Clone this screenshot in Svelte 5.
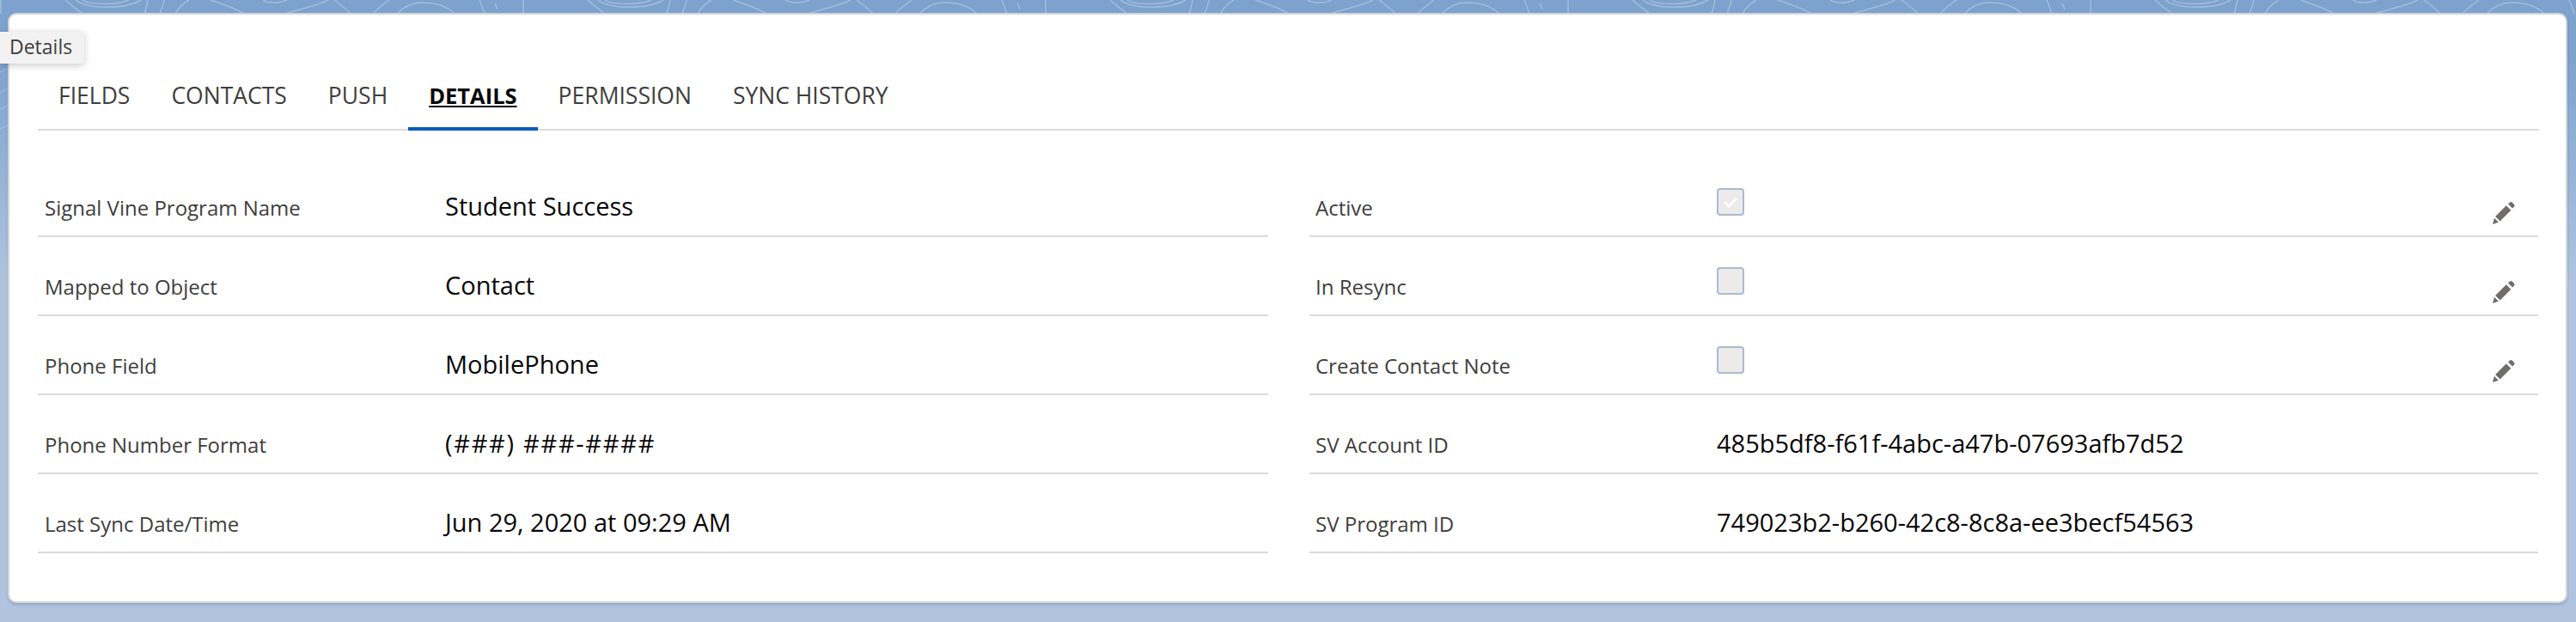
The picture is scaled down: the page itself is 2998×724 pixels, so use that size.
<script>
	const tabs = ['FIELDS', 'CONTACTS', 'PUSH', 'DETAILS', 'PERMISSION', 'SYNC HISTORY'];
	const active = 'DETAILS';

	const rows = [
		[
			{ label: 'Signal Vine Program Name', value: 'Student Success' },
			{ label: 'Active', check: true, on: true }
		],
		[
			{ label: 'Mapped to Object', value: 'Contact' },
			{ label: 'In Resync', check: true }
		],
		[
			{ label: 'Phone Field', value: 'MobilePhone' },
			{ label: 'Create Contact Note', check: true }
		],
		[
			{ label: 'Phone Number Format', value: '(###) ###-####', wide: true },
			{ label: 'SV Account ID', value: '485b5df8-f61f-4abc-a47b-07693afb7d52' }
		],
		[
			{ label: 'Last Sync Date/Time', value: 'Jun 29, 2020 at 09:29 AM' },
			{ label: 'SV Program ID', value: '749023b2-b260-42c8-8c8a-ee3becf54563' }
		]
	];
</script>

<div class="page">
	<svg class="contours" width="2998" height="200" fill="none" aria-hidden="true">
		<defs>
			<pattern id="topo" width="608" height="200" patternUnits="userSpaceOnUse">
				<g stroke="#a3bcdb" stroke-width="1.500">
					<path d="M76 0c6 6 14 11 20 16M96 0c8 6 40 6 54 0M88 0c10 10 56 12 76 0" />
					<path d="M172 0c-1 5-2 10-4 16M191 0c-1 6-3 11-5 16M204 16c3-6 9-12 16-16M245 0c15 5 30 10 39 16" />
					<path d="M306 0c5 4 20 4 28 0M332 16c18-6 36-9 50-16M389 0c8 6 14 10 19 16M453 0c-7 5-14 10-19 16" />
					<path d="M462 16c8-8 18-13 29-13 16 0 30 5 38 13M558 0c2 5 4 10 6 16M576 4l3 7M609 0v16M1 0v16" />
				</g>
			</pattern>
		</defs>
		<rect width="2998" height="16" fill="url(#topo)" />
		<path d="M0 84c3-2 6-3 10-4M0 108c3-2 6-4 10-6M0 128c3-2 6-4 10-6M0 150c3-1 6-3 10-4" stroke="#bccde4" stroke-width="1" opacity="0.7" />
	</svg>

	<div class="card">
		<nav class="tabs">
			{#each tabs as tab}
				<span class="tab" class:active={tab === active}>{tab}</span>
			{/each}
		</nav>

		<div class="rows">
			{#each rows as row}
				{#each row as cell}
					<div class="cell">
						<span class="label">{cell.label}</span>
						{#if cell.check}
							<span class="box">
								{#if cell.on}
									<svg width="18" height="14" viewBox="0 0 18 14" fill="none">
										<path d="M2 7l5 5 9-9" stroke="#fff" stroke-width="3" />
									</svg>
								{/if}
							</span>
							<svg class="pencil" width="28" height="28" viewBox="0 0 28 28">
								<path d="M21 1.500a2 2 0 0 1 2.600 0l2.400 2.400a2 2 0 0 1 0 2.600l-2 2-5-5zM16.800 5.200l5.500 5.500L9.600 23.400l-5.500-5.500zM2.900 19.700l5 5L1 27z" fill="#706e6b" />
							</svg>
						{:else}
							<span class="value" class:wide={cell.wide}>{cell.value}</span>
						{/if}
					</div>
				{/each}
			{/each}
		</div>
	</div>

	<div class="tooltip">Details</div>
</div>

<style>
	:global(body) {
		margin: 0;
	}

	.page {
		position: relative;
		box-sizing: border-box;
		width: 2998px;
		height: 724px;
		padding: 15px 10px 0 9px;
		background: linear-gradient(#7ca2cd, #7ca2cd 60px, #b0c4df 330px);
		font-family: 'Open Sans', sans-serif;
		overflow: hidden;
	}

	.contours {
		position: absolute;
		top: 0;
		left: 0;
	}

	.card {
		position: relative;
		box-sizing: border-box;
		height: 687px;
		padding: 47px 31px 0 33px;
		background: #fff;
		border: 2px solid #d3d6da;
		border-radius: 10px;
		box-shadow: 0 2px 3px rgba(60, 80, 110, 0.25);
	}

	.tabs {
		display: flex;
		height: 86px;
		border-bottom: 2px solid #dddbda;
	}

	.tab {
		box-sizing: border-box;
		height: 88px;
		padding: 0 24px;
		line-height: 94px;
		font-size: 26.500px;
		color: #3e3e3c;
	}

	.active {
		font-size: 25.500px;
		font-weight: 700;
		color: #080707;
		text-decoration: underline;
		border-bottom: 4px solid #0b5cba;
	}

	.rows {
		display: grid;
		grid-template-columns: 1432px 1430px;
		column-gap: 48px;
		grid-auto-rows: 92px;
		padding-top: 32px;
	}

	.cell {
		position: relative;
		display: flex;
		align-items: flex-end;
		box-sizing: border-box;
		border-bottom: 2px solid #dddbda;
		padding: 0 0 12px 8px;
	}

	.cell:nth-child(even) {
		padding-left: 7px;
	}

	.label {
		width: 466px;
		margin-bottom: 1px;
		font-size: 24px;
		line-height: 38px;
		color: #3e3e3c;
	}

	.cell:nth-child(even) .label {
		width: 467px;
	}

	.value {
		font-size: 29px;
		line-height: 44px;
		color: #080707;
	}

	.wide {
		letter-spacing: 1.700px;
	}

	.box {
		box-sizing: border-box;
		display: flex;
		align-items: center;
		justify-content: center;
		width: 32px;
		height: 32px;
		margin-bottom: 11px;
		background: #ecebea;
		border: 2px solid #a9bbd0;
		border-radius: 4px;
	}

	.pencil {
		margin-left: auto;
		margin-right: 26px;
		margin-bottom: 0;
	}

	.tooltip {
		position: absolute;
		top: 37px;
		left: 0;
		box-sizing: border-box;
		width: 98px;
		height: 37px;
		padding-left: 11px;
		line-height: 35px;
		font-size: 23px;
		color: #3e3e3c;
		background: #f3f2f2;
		border-radius: 0 3px 3px 0;
		box-shadow: 0 2px 8px rgba(0, 0, 0, 0.22);
	}
</style>
